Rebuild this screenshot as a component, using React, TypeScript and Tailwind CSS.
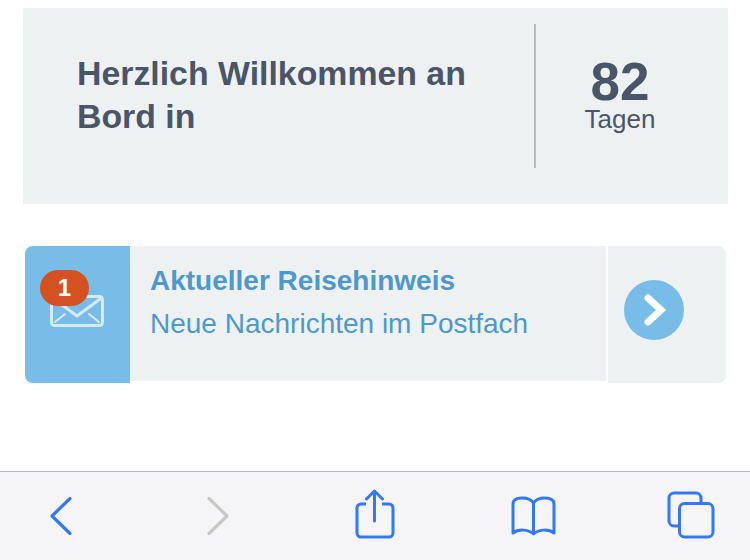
import React from "react";

const BLUE = "#3478f6";

function BackIcon({ color = BLUE, flip = false }: { color?: string; flip?: boolean }) {
  return (
    <svg width="24" height="38" viewBox="0 0 24 38" fill="none" className={flip ? "rotate-180" : ""}>
      <path d="M21 1.5 L3 19 L21 36.5" stroke={color} strokeWidth="3.2" strokeLinecap="round" strokeLinejoin="round" />
    </svg>
  );
}

function ShareIcon() {
  return (
    <svg width="40" height="50" viewBox="0 0 40 50" fill="none" stroke={BLUE} strokeWidth="3">
      <path d="M11 15 H6 A4 4 0 0 0 2 19 V44 A4 4 0 0 0 6 48 H34 A4 4 0 0 0 38 44 V19 A4 4 0 0 0 34 15 H27" />
      <path d="M19.5 32 V3" strokeLinecap="round" />
      <path d="M11.5 10 L19.5 2 L27.5 10" strokeLinecap="round" strokeLinejoin="round" />
    </svg>
  );
}

function BookIcon() {
  return (
    <svg width="46" height="40" viewBox="0 0 46 40" fill="none" stroke={BLUE} strokeWidth="3" strokeLinejoin="round">
      <path d="M22.5 7 C20 3 15 2 11 2 C6 2 2 3.5 2 8 V37 C7 33 17 33 22.5 38 C28 33 38 33 43 37 V8 C43 3.5 39 2 34 2 C30 2 25 3 22.5 7 Z" />
      <path d="M22.5 7 V38" />
    </svg>
  );
}

function TabsIcon() {
  return (
    <svg width="48" height="48" viewBox="0 0 48 48" fill="none" stroke={BLUE} strokeWidth="3">
      <path d="M11 35 H7 A5 5 0 0 1 2 30 V7 A5 5 0 0 1 7 2 H29 A5 5 0 0 1 34 7 V12" />
      <rect x="12.5" y="12.5" width="33.5" height="33.5" rx="5" />
    </svg>
  );
}

function MailIcon() {
  return (
    <svg width="54" height="32" viewBox="0 0 54 32" fill="none" stroke="#d5eaf8" strokeWidth="3" strokeLinecap="round" strokeLinejoin="round">
      <rect x="1.5" y="1.5" width="51" height="29" rx="3" />
      <path d="M2.5 3 L27 21 L51.5 3" />
      <path d="M5 27 L15 19" strokeWidth="2" />
      <path d="M49 27 L39 19" strokeWidth="2" />
    </svg>
  );
}

export default function App() {
  return (
    <div className="w-[750px] h-[560px] flex flex-col bg-white text-[#4a5568] font-['Liberation_Sans',Arial,sans-serif] overflow-hidden">
      <div className="ml-[23px] mt-2 w-[705px] h-[196px] bg-[#edf1f2] flex pt-4">
        <div className="w-[513px] h-36 border-r-2 border-[#b9bcbe] pl-[54px] pt-[28px]">
          <h1 className="text-[33.85px] leading-[43px] font-bold">
            Herzlich Willkommen an
            <br />
            Bord in
          </h1>
        </div>
        <div className="flex-1 flex flex-col items-center pt-[34px] pr-6">
          <div className="text-[53px] leading-[48px] font-bold">82</div>
          <div className="text-[26px] leading-[26px]">Tagen</div>
        </div>
      </div>

      <div className="ml-[25px] mt-[42px] w-[701px] h-[137px] flex items-start">
        <div className="relative w-[105px] h-[137px] bg-[#78bde7] rounded-l-[8px] shrink-0 pl-[25px] pt-[49px]">
          <MailIcon />
          <div className="absolute left-[15px] top-6 w-[49px] h-9 rounded-[18px] bg-[#d45221] text-white text-[24px] leading-9 font-bold text-center">
            1
          </div>
        </div>
        <div className="w-[476px] h-[135px] bg-[#edf1f2] pl-[20px] pt-[19px] text-[#4f98ca]">
          <div className="text-[28px] leading-[32px] font-bold">Aktueller Reisehinweis</div>
          <div className="text-[28px] leading-[32px] mt-[11px]">Neue Nachrichten im Postfach</div>
        </div>
        <div className="ml-[2px] w-[118px] h-[137px] bg-[#edf1f2] rounded-r-[8px] pl-4 pt-[34px]">
          <div className="w-[60px] h-[60px] rounded-full bg-[#78bde7] flex items-center justify-center pl-[2px]">
            <svg width="24" height="34" viewBox="0 0 24 34" fill="none">
              <path d="M5 5 L18 17 L5 29" stroke="#ffffff" strokeWidth="7" strokeLinecap="round" strokeLinejoin="miter" />
            </svg>
          </div>
        </div>
      </div>

      <div className="mt-auto h-[89px] border-t border-[#b7b7b7] bg-[#f5f5f7]">
        <div className="w-[750px] flex items-start pt-[25px]">
          <div className="ml-[49px]">
            <BackIcon />
          </div>
          <div className="ml-[133px]">
            <BackIcon color="#c8c8c8" flip />
          </div>
          <div className="ml-[125px] -mt-[8px]">
            <ShareIcon />
          </div>
          <div className="ml-[116px] -mt-[1px]">
            <BookIcon />
          </div>
          <div className="ml-[110px] -mt-[6px]">
            <TabsIcon />
          </div>
        </div>
      </div>
    </div>
  );
}
